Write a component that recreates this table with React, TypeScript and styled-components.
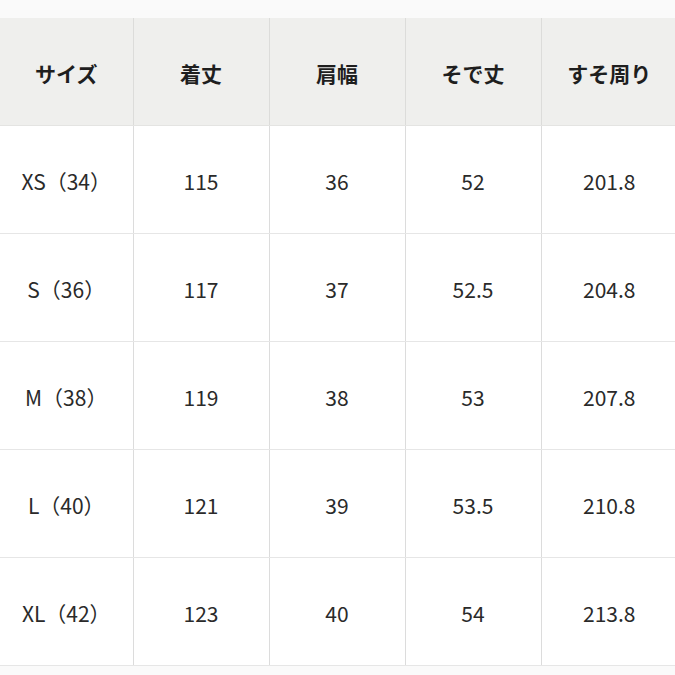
import styled, { createGlobalStyle } from "styled-components";

const GlobalStyle = createGlobalStyle`
  html, body {
    margin: 0;
    padding: 0;
    background: #fafafa;
    font-family: "Noto Sans CJK JP", "Noto Sans", sans-serif;
  }
`;

const Page = styled.div`
  width: 675px;
  height: 675px;
  overflow: hidden;
  padding-top: 18px;
  box-sizing: border-box;
  background: #fafafa;
`;

const Table = styled.table`
  border-collapse: collapse;
  table-layout: fixed;
  width: 677px;
  background: #fff;
`;

const Th = styled.th`
  height: 103px;
  background: #efefed;
  color: #1e1e1e;
  font-family: "Noto Sans CJK JP", sans-serif;
  font-weight: 700;
  font-size: 21px;
  line-height: 1;
  text-align: center;
  border-bottom: 1px solid #e4e4e2;
  border-left: 1px solid #dcdcda;
  padding: 4px 0 0;
  &:first-child {
    border-left: none;
  }
`;

const Td = styled.td`
  height: 103px;
  color: #2a2a2a;
  font-family: "Noto Sans CJK JP", sans-serif;
  font-size: 21px;
  line-height: 1;
  text-align: center;
  padding: 4px 0 0;
  border-bottom: 1px solid #e6e6e6;
  border-left: 1px solid #dcdcdc;
  &:first-child {
    border-left: none;
  }
`;

const columns = ["サイズ", "着丈", "肩幅", "そで丈", "すそ周り"];
const widths = [133, 136, 136, 136, 136];

const rows = [
  ["XS（34）", "115", "36", "52", "201.8"],
  ["S（36）", "117", "37", "52.5", "204.8"],
  ["M（38）", "119", "38", "53", "207.8"],
  ["L（40）", "121", "39", "53.5", "210.8"],
  ["XL（42）", "123", "40", "54", "213.8"],
];

export default function App() {
  return (
    <Page>
      <GlobalStyle />
      <Table>
        <colgroup>
          {widths.map((w, i) => (
            <col key={i} style={{ width: w }} />
          ))}
        </colgroup>
        <thead>
          <tr>
            {columns.map((c) => (
              <Th key={c}>{c}</Th>
            ))}
          </tr>
        </thead>
        <tbody>
          {rows.map((r) => (
            <tr key={r[0]}>
              {r.map((v, i) => (
                <Td key={i}>{v}</Td>
              ))}
            </tr>
          ))}
        </tbody>
      </Table>
    </Page>
  );
}
